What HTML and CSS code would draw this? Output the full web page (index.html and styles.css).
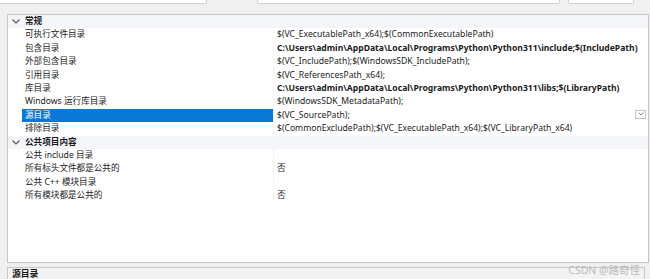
FILE: index.html
```html
<!DOCTYPE html>
<html lang="zh-CN">
<head>
<meta charset="utf-8">
<link rel="stylesheet" href="styles.css">
</head>
<body>
<div class="topbar">
  <div class="field f1"></div>
  <div class="field f2"></div>
  <div class="field f3"></div>
</div>
<div class="panel">
  <div class="row group">
    <span class="chev"><svg width="8" height="5" viewBox="0 0 8 5"><path d="M0.5 0.5 L4 4 L7.5 0.5" fill="none" stroke="#555" stroke-width="1.1"/></svg></span>
    <span class="label">常规</span><span class="value"></span>
  </div>
  <div class="row"><span class="chev"></span><span class="label">可执行文件目录</span><span class="value">$(VC_ExecutablePath_x64);$(CommonExecutablePath)</span></div>
  <div class="row"><span class="chev"></span><span class="label">包含目录</span><span class="value bold">C:\Users\admin\AppData\Local\Programs\Python\Python311\include;$(IncludePath)</span></div>
  <div class="row"><span class="chev"></span><span class="label">外部包含目录</span><span class="value">$(VC_IncludePath);$(WindowsSDK_IncludePath);</span></div>
  <div class="row"><span class="chev"></span><span class="label">引用目录</span><span class="value">$(VC_ReferencesPath_x64);</span></div>
  <div class="row"><span class="chev"></span><span class="label">库目录</span><span class="value bold">C:\Users\admin\AppData\Local\Programs\Python\Python311\libs;$(LibraryPath)</span></div>
  <div class="row"><span class="chev"></span><span class="label">Windows 运行库目录</span><span class="value">$(WindowsSDK_MetadataPath);</span></div>
  <div class="row selected"><span class="chev"></span><span class="label">源目录</span><span class="value">$(VC_SourcePath);<span class="dd"><svg width="6" height="4" viewBox="0 0 6 4"><path d="M0.5 0.5 L3 3 L5.5 0.5" fill="none" stroke="#777" stroke-width="0.9"/></svg></span></span></div>
  <div class="row"><span class="chev"></span><span class="label">排除目录</span><span class="value">$(CommonExcludePath);$(VC_ExecutablePath_x64);$(VC_LibraryPath_x64)</span></div>
  <div class="row group">
    <span class="chev"><svg width="8" height="5" viewBox="0 0 8 5"><path d="M0.5 0.5 L4 4 L7.5 0.5" fill="none" stroke="#555" stroke-width="1.1"/></svg></span>
    <span class="label">公共项目内容</span><span class="value"></span>
  </div>
  <div class="row"><span class="chev"></span><span class="label">公共 include 目录</span><span class="value"></span></div>
  <div class="row"><span class="chev"></span><span class="label">所有标头文件都是公共的</span><span class="value">否</span></div>
  <div class="row"><span class="chev"></span><span class="label">公共 C++ 模块目录</span><span class="value"></span></div>
  <div class="row"><span class="chev"></span><span class="label">所有模块都是公共的</span><span class="value">否</span></div>
</div>
<div class="desc"><span class="desc-title">源目录</span></div>
<div class="watermark">CSDN @路奇怪</div>
</body>
</html>
```
FILE: styles.css
```css
html, body {
  margin: 0;
  padding: 0;
}
body {
  width: 650px;
  height: 279px;
  overflow: hidden;
  background: #f0f0f0;
  font-family: "Noto Sans", "Noto Sans CJK SC", sans-serif;
  font-size: 8.6px;
  color: #1b1b1b;
  position: relative;
}
.topbar {
  height: 14px;
  display: flex;
  align-items: flex-start;
}
.field {
  height: 3px;
  background: #fff;
  border: 1px solid #cfcfcf;
  border-top: none;
  border-radius: 0 0 2px 2px;
}
.f1 { width: 207px; margin-left: -2px; }
.f2 { width: 301px; margin-left: 50px; }
.f3 { width: 64px; margin-left: 8px; }
.panel {
  margin-left: 7px;
  width: 642px;
  height: 249px;
  box-sizing: border-box;
  border: 1px solid #c8c8c8;
  background: #fff;
}
.row {
  display: grid;
  grid-template-columns: 14px 251px 1fr;
  height: 13.4px;
  line-height: 13.4px;
  white-space: nowrap;
}
.row.group {
  background: #f4f6fa;
  font-weight: bold;
}
.chev {
  display: flex;
  align-items: center;
  justify-content: center;
  padding-left: 1px;
}
.label {
  padding-left: 3px;
  overflow: hidden;
}
.value {
  padding-left: 3px;
  overflow: hidden;
  position: relative;
  border-left: 1px solid #f3f3f3;
}
.row.group .value { border-left: none; }
.bold { font-weight: bold; }
.selected .label {
  background: #0a78d6;
  color: #fff;
}
.dd {
  position: absolute;
  right: 2px;
  top: 1px;
  width: 11px;
  height: 9px;
  box-sizing: border-box;
  border: 1px solid #c4c4c4;
  background: #fff;
  display: flex;
  align-items: center;
  justify-content: center;
}
.desc {
  margin-top: 4px;
  margin-left: 7px;
  width: 638px;
  height: 20px;
  box-sizing: border-box;
  border: 1px solid #c8c8c8;
  background: #f3f3f3;
  padding-left: 4px;
}
.desc-title {
  display: block;
  font-weight: bold;
  font-size: 8.8px;
  line-height: 10px;
  padding-top: 1px;
}
.watermark {
  position: absolute;
  right: 10px;
  top: 262px;
  font-size: 10.5px;
  color: #b9b9b9;
  font-family: "Noto Sans", "Noto Sans CJK SC", sans-serif;
}
```
